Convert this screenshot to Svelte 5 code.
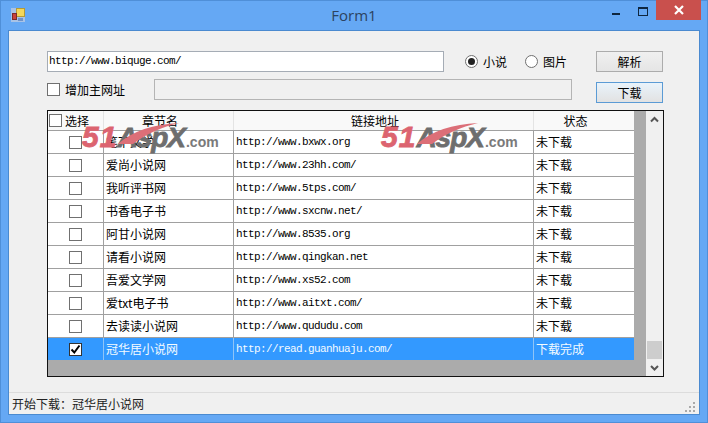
<script>
  const sites = [
    ["笔下文学", "http://www.bxwx.org"],
    ["爱尚小说网", "http://www.23hh.com/"],
    ["我听评书网", "http://www.5tps.com/"],
    ["书香电子书", "http://www.sxcnw.net/"],
    ["阿甘小说网", "http://www.8535.org"],
    ["请看小说网", "http://www.qingkan.net"],
    ["吾爱文学网", "http://www.xs52.com"],
    ["爱txt电子书", "http://www.aitxt.com/"],
    ["去读读小说网", "http://www.qududu.com"],
    ["冠华居小说网", "http://read.guanhuaju.com/"]
  ];
</script>

<div class="window">
  <header class="titlebar">
    <svg class="appicon" width="14" height="14" viewBox="0 0 14 14">
      <rect width="14" height="14" fill="#a9c3e6" />
      <rect x="5.5" y="0.5" width="8" height="8" fill="#f4d75a" stroke="#b59a35" />
      <rect x="1.5" y="5.5" width="4" height="6" fill="#c8423c" stroke="#7d2a2a" />
      <rect x="7" y="10" width="5" height="3" fill="#6f93c9" />
    </svg>
    <div class="title">Form1</div>
    <div class="controls">
      <div class="minimize"><span></span></div>
      <div class="maximize"><span></span></div>
      <div class="close">
        <svg width="12" height="10" viewBox="0 0 12 10">
          <path d="M2 1 L10 9 M10 1 L2 9" stroke="#fff" stroke-width="2.2" />
        </svg>
      </div>
    </div>
  </header>

  <main class="client">
    <div class="form">
      <div class="toprow">
        <div class="url">http://www.biquge.com/</div>
        <label class="radio"><i class="dot on"></i>小说</label>
        <label class="radio second"><i class="dot"></i>图片</label>
        <button class="btn parse">解析</button>
      </div>
      <div class="secondrow">
        <label class="addmain"><i class="box"></i>增加主网址</label>
        <div class="disabled"></div>
        <button class="btn download">下载</button>
      </div>

      <div class="grid">
        <div class="table">
          <div class="row head">
            <div class="cell select"><i class="box"></i>选择</div>
            <div class="cell name">章节名</div>
            <div class="cell link">链接地址</div>
            <div class="cell status">状态</div>
          </div>
          {#each sites as site, i}
            <div class="row body" class:selected={i === sites.length - 1}>
              <div class="cell check">
                <i class="box">
                  {#if i === sites.length - 1}
                    <svg width="11" height="11" viewBox="0 0 11 11">
                      <path d="M1.5 5.5 L4.3 8.5 L9.5 1.5" fill="none" stroke="#000" stroke-width="2" />
                    </svg>
                  {/if}
                </i>
              </div>
              <div class="cell name">{site[0]}</div>
              <div class="cell link mono">{site[1]}</div>
              <div class="cell status">{i === sites.length - 1 ? "下载完成" : "未下载"}</div>
            </div>
          {/each}
        </div>
        <div class="scrollbar">
          <svg width="17" height="17" viewBox="0 0 17 17">
            <path d="M5 10.5 L8.5 7 L12 10.5" fill="none" stroke="#555" stroke-width="2" />
          </svg>
          <div class="track"><div class="thumb"></div></div>
          <svg width="17" height="17" viewBox="0 0 17 17">
            <path d="M5 7 L8.5 10.5 L12 7" fill="none" stroke="#555" stroke-width="2" />
          </svg>
        </div>

        <div class="mark first">
          <b>51</b><em>AspX</em><span>.com</span>
          <svg class="swoosh" width="62" height="22" viewBox="0 0 62 22">
            <path d="M0 21 C14 8 36 1 61 0 C44 4 28 11 15 21 Z" fill="#dc6f78" />
          </svg>
        </div>
        <div class="mark second">
          <b>51</b><em>AspX</em><span>.com</span>
          <svg class="swoosh" width="62" height="22" viewBox="0 0 62 22">
            <path d="M0 21 C14 8 36 1 61 0 C44 4 28 11 15 21 Z" fill="#dc6f78" />
          </svg>
        </div>
      </div>
    </div>

    <footer class="statusbar">
      <span>开始下载：冠华居小说网</span>
      <svg class="grip" width="12" height="12" viewBox="0 0 12 12" fill="#a9a9a9">
        <rect x="8" y="0" width="2" height="2" />
        <rect x="4" y="4" width="2" height="2" /><rect x="8" y="4" width="2" height="2" />
        <rect x="0" y="8" width="2" height="2" /><rect x="4" y="8" width="2" height="2" /><rect x="8" y="8" width="2" height="2" />
      </svg>
    </footer>
  </main>
</div>

<style>
  :global(body) {
    margin: 0;
    background: #65a8f4;
    font-family: "Noto Sans CJK SC", sans-serif;
    font-size: 12px;
    color: #000;
  }

  .window {
    width: 708px;
    height: 423px;
    box-sizing: border-box;
    padding: 0 8px 8px;
    background: #65a8f4;
    box-shadow: inset 0 0 0 1px #4f8fd8;
    display: flex;
    flex-direction: column;
  }

  .titlebar {
    height: 30px;
    flex: none;
    margin: 0 -8px;
    display: flex;
    align-items: flex-start;
    position: relative;
  }

  .appicon {
    margin: 8px 0 0 11px;
  }

  .title {
    position: absolute;
    left: 0;
    right: 0;
    top: 5px;
    text-align: center;
    font-family: "Open Sans", sans-serif;
    font-size: 15px;
    color: #2c4360;
  }

  .controls {
    margin-left: auto;
    display: flex;
    margin-right: 7px;
  }

  .minimize,
  .maximize {
    width: 26px;
    height: 20px;
    position: relative;
  }

  .minimize span {
    position: absolute;
    left: 8px;
    top: 13px;
    width: 8px;
    height: 2px;
    background: #0f2740;
  }

  .maximize span {
    position: absolute;
    left: 8px;
    top: 7px;
    width: 8px;
    height: 6px;
    border: 1px solid #0f2740;
    border-top-width: 2px;
  }

  .close {
    width: 45px;
    height: 20px;
    background: #c9504d;
    display: flex;
    align-items: center;
    justify-content: center;
  }

  .client {
    flex: 1;
    background: #f0f0f0;
    border: 1px solid #4a8ad0;
    display: flex;
    flex-direction: column;
  }

  .form {
    flex: 1;
    padding: 20px 0 0 38px;
  }

  .toprow {
    display: flex;
    align-items: center;
    height: 21px;
  }

  .url {
    width: 394px;
    height: 19px;
    line-height: 18px;
    padding-left: 1px;
    background: #fff;
    border: 1px solid #a5acb5;
    font-family: "Liberation Mono", monospace;
    font-size: 11px;
    letter-spacing: -0.6px;
    flex: none;
  }

  .radio {
    display: flex;
    align-items: center;
    gap: 5px;
    margin-left: 21px;
  }

  .radio.second {
    margin-left: 18px;
  }

  .dot {
    width: 11px;
    height: 11px;
    border: 1px solid #707070;
    border-radius: 50%;
    background: #fff;
    position: relative;
  }

  .dot.on::after {
    content: "";
    position: absolute;
    left: 2px;
    top: 2px;
    width: 7px;
    height: 7px;
    border-radius: 50%;
    background: #222;
  }

  .btn {
    width: 67px;
    height: 21px;
    padding: 0;
    border: 1px solid #acacac;
    background: linear-gradient(#f0f0f0, #e5e5e5);
    font: inherit;
    color: #000;
    flex: none;
  }

  .parse {
    margin-left: auto;
    margin-right: 36px;
  }

  .secondrow {
    display: flex;
    align-items: flex-start;
    height: 38px;
    padding-top: 7px;
    box-sizing: border-box;
  }

  .addmain {
    display: flex;
    align-items: center;
    gap: 5px;
    width: 107px;
    height: 20px;
    flex: none;
  }

  .box {
    width: 11px;
    height: 11px;
    flex: none;
    display: inline-flex;
    border: 1px solid #707070;
    background: #fff;
  }

  .disabled {
    width: 416px;
    height: 19px;
    border: 1px solid #b4b4b4;
    background: #f0f0f0;
    flex: none;
  }

  .download {
    margin-left: 24px;
    margin-top: 3px;
    border-color: #5b9bd5;
    background: linear-gradient(#e9f3fb, #e2e2e2);
  }

  .grid {
    position: relative;
    width: 615px;
    height: 265px;
    border: 1px solid #111;
    background: #ababab;
    display: flex;
    justify-content: space-between;
    overflow: hidden;
  }

  .table {
    width: 586px;
  }

  .row {
    display: flex;
    height: 22px;
    background: #fff;
    border-bottom: 1px solid #a0a0a0;
  }

  .row.head {
    height: 19px;
    background: #f9f9f9;
  }

  .row.selected {
    background: #3399ff;
    color: #f4fbff;
    border-bottom: none;
  }

  .cell {
    box-sizing: border-box;
    border-right: 1px solid #a0a0a0;
    display: flex;
    align-items: center;
    padding-left: 2px;
    white-space: nowrap;
    overflow: hidden;
    flex: none;
  }

  .select,
  .check {
    width: 56px;
  }

  .select {
    gap: 3px;
    padding-left: 1px;
  }

  .check {
    justify-content: center;
    padding: 0;
  }

  .name {
    width: 130px;
  }

  .link {
    width: 300px;
  }

  .status {
    width: 100px;
    border-right: none;
  }

  .body .name,
  .body .status {
    padding-bottom: 2px;
  }

  .head .cell {
    justify-content: center;
    border-right-color: #e4e4e4;
    padding-right: 19px;
  }

  .head .select {
    justify-content: flex-start;
    padding-right: 0;
  }

  .mono {
    font-family: "Liberation Mono", monospace;
    font-size: 11px;
    letter-spacing: -0.6px;
  }

  .selected .cell {
    border-right-color: #8fc4f7;
  }

  .selected .box {
    border-color: #333;
  }

  .scrollbar {
    width: 17px;
    background: #f0f0f0;
    display: flex;
    flex-direction: column;
    flex: none;
  }

  .track {
    flex: 1;
    display: flex;
    align-items: flex-end;
  }

  .thumb {
    width: 15px;
    margin-left: 1px;
    height: 18px;
    background: #cdcdcd;
  }

  .mark {
    position: absolute;
    top: 9px;
    display: flex;
    align-items: baseline;
    font-family: "Liberation Sans", sans-serif;
    font-weight: bold;
    font-style: italic;
    white-space: nowrap;
    line-height: 34px;
    pointer-events: none;
  }

  .mark.first {
    left: 34px;
  }

  .mark.second {
    left: 333px;
  }

  .mark b {
    font-size: 30px;
    color: #dc6470;
    letter-spacing: 1px;
    -webkit-text-stroke: 0.8px #dc6470;
  }

  .mark em {
    font-size: 28px;
    color: #6e6e6e;
    letter-spacing: -1px;
    -webkit-text-stroke: 0.8px #6e6e6e;
  }

  .mark span {
    font-size: 14px;
    color: #7a7a7a;
    font-style: normal;
    margin-left: 1px;
  }

  .swoosh {
    position: absolute;
    left: 36px;
    top: 3px;
  }

  .statusbar {
    height: 21px;
    flex: none;
    border-top: 1px solid #dcdcdc;
    display: flex;
    align-items: center;
    justify-content: space-between;
    padding: 0 2px 0 3px;
    color: #222;
  }

  .grip {
    margin-top: 8px;
  }
</style>
